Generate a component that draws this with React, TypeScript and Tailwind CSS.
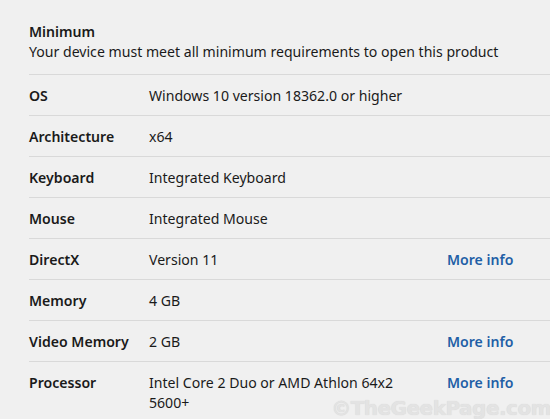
const rows = [
  { label: 'OS', value: 'Windows 10 version 18362.0 or higher', more: false },
  { label: 'Architecture', value: 'x64', more: false },
  { label: 'Keyboard', value: 'Integrated Keyboard', more: false },
  { label: 'Mouse', value: 'Integrated Mouse', more: false },
  { label: 'DirectX', value: 'Version 11', more: true },
  { label: 'Memory', value: '4 GB', more: false },
  { label: 'Video Memory', value: '2 GB', more: true },
  { label: 'Processor', value: 'Intel Core 2 Duo or AMD Athlon 64x2 5600+', more: true },
];

export default function App() {
  return (
    <div
      className="relative w-[550px] h-[419px] overflow-hidden bg-[#f0f0f0] pl-[29px] text-[14.1px] text-[#1a1a1a]"
      style={{ fontFamily: '"Noto Sans", "Open Sans", sans-serif' }}
    >
      {/* Header */}
      <div className="pt-[22px] pb-[12px] leading-[20px]">
        <div className="font-semibold">Minimum</div>
        <div>Your device must meet all minimum requirements to open this product</div>
      </div>

      {/* Requirement rows */}
      <div>
        {rows.map((row) => (
          <div key={row.label} className="flex border-t border-[#d9d9d9] pt-[11px] pb-[9px] leading-[20px] min-h-[41px]">
            <div className="w-[120px] shrink-0 font-semibold">{row.label}</div>
            <div className="w-[298px] shrink-0 pr-4">{row.value}</div>
            {row.more && <div className="font-semibold text-[#1f5fa6]">More info</div>}
          </div>
        ))}
      </div>

      {/* Watermark */}
      <div
        className="absolute right-[-1px] bottom-[1px] text-[20px] font-black leading-none text-[#e3e3e3] tracking-tight"
        style={{ fontFamily: '"DejaVu Sans", sans-serif', textShadow: '0 0 1px #d2d2d2' }}
      >
        ©TheGeekPage.com
      </div>
    </div>
  );
}
